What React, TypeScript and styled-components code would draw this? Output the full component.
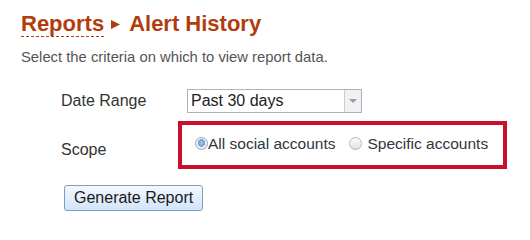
import React from "react";
import styled, { createGlobalStyle } from "styled-components";

const Global = createGlobalStyle`
  html, body { margin: 0; padding: 0; background: #ffffff; }
  body { font-family: "Liberation Sans", Arial, sans-serif; }
`;

const Page = styled.div`
  padding: 11px 0 0 21px;
`;

const Title = styled.h1`
  margin: 0;
  font-size: 22px;
  line-height: 26px;
  font-weight: bold;
  color: #b23c0c;
  white-space: nowrap;
`;

const Crumb = styled.span`
  border-bottom: 1px dashed #b23c0c;
`;

const Sep = styled.svg`
  display: inline-block;
  width: 9px;
  height: 9px;
  margin: 0 9px 0 7px;
  vertical-align: 2px;
`;

const Intro = styled.p`
  margin: 10px 0 0;
  font-size: 14.8px;
  line-height: 20px;
  color: #555555;
`;

const Form = styled.div`
  margin: 22px 0 0 40px;
  display: flex;
  flex-direction: column;
`;

const Row = styled.div<{ $gap?: number; $align?: string }>`
  display: flex;
  align-items: ${(p) => p.$align || "center"};
  margin-top: ${(p) => p.$gap || 0}px;
`;

const Label = styled.div<{ $pad?: number }>`
  width: 126px;
  flex: none;
  font-size: 16px;
  line-height: 20px;
  color: #333333;
  padding-top: ${(p) => p.$pad || 0}px;
`;

const Select = styled.div`
  box-sizing: border-box;
  width: 175px;
  height: 24px;
  border: 1px solid #aab3bf;
  display: flex;
  align-items: stretch;
  background: #ffffff;
`;

const SelectText = styled.div`
  flex: 1;
  font-size: 16px;
  line-height: 22px;
  padding-left: 3px;
  color: #222222;
`;

const SelectArrow = styled.div`
  width: 16px;
  border-left: 1px solid #c9ced6;
  background: #f1f1f1;
  display: flex;
  align-items: center;
  justify-content: center;
`;

const Highlight = styled.div`
  box-sizing: border-box;
  width: 329px;
  margin-left: -9px;
  border: 4px solid #c8102e;
  padding: 9px 0 11px 13px;
  font-size: 15.5px;
  line-height: 20px;
  color: #2f3640;
  white-space: nowrap;
`;

const Option = styled.label<{ $gap: number; $lead?: number }>`
  display: inline;
  margin-left: ${(p) => p.$lead || 0}px;
  span.text { margin-left: ${(p) => p.$gap}px; }
`;

const Radio = styled.span<{ $checked?: boolean }>`
  display: inline-block;
  box-sizing: border-box;
  width: 13px;
  height: 13px;
  border-radius: 50%;
  vertical-align: middle;
  position: relative;
  top: -1px;
  border: 1px solid ${(p) => (p.$checked ? "#9aa9bb" : "#b5b5b5")};
  background: ${(p) =>
    p.$checked
      ? "radial-gradient(circle at 50% 45%, #a9c8ec 0, #6f9bd0 3.5px, #eef2f7 4px, #dde3ea 100%)"
      : "linear-gradient(#fbfbfb, #e2e2e2)"};
`;

const Button = styled.button`
  margin: 16px 0 0 3px;
  align-self: flex-start;
  box-sizing: border-box;
  height: 26px;
  padding: 0 9px;
  font-family: "Liberation Sans", Arial, sans-serif;
  font-size: 16px;
  line-height: 22px;
  color: #1a1a1a;
  border: 1px solid #7f9cc4;
  border-radius: 3px;
  background: linear-gradient(#f3f8fe, #d2e4fb);
  cursor: pointer;
`;

export default function App() {
  return (
    <>
      <Global />
      <Page>
        <Title>
          <Crumb>Reports</Crumb>
          <Sep viewBox="0 0 9 9">
            <path d="M0 0L9 4.5L0 9z" fill="#b23c0c" />
          </Sep>
          Alert History
        </Title>
        <Intro>Select the criteria on which to view report data.</Intro>
        <Form>
          <Row>
            <Label>Date Range</Label>
            <Select>
              <SelectText>Past 30 days</SelectText>
              <SelectArrow>
                <svg width="8" height="4" viewBox="0 0 8 4">
                  <path d="M0 0h8L4 4z" fill="#8b9cb5" />
                </svg>
              </SelectArrow>
            </Select>
          </Row>
          <Row $gap={8} $align="flex-start">
            <Label $pad={19}>Scope</Label>
            <Highlight>
              <Option $gap={0}>
                <Radio $checked />
                <span className="text">All social accounts</span>
              </Option>
              <Option $gap={6} $lead={13}>
                <Radio />
                <span className="text">Specific accounts</span>
              </Option>
            </Highlight>
          </Row>
          <Button>Generate Report</Button>
        </Form>
      </Page>
    </>
  );
}
